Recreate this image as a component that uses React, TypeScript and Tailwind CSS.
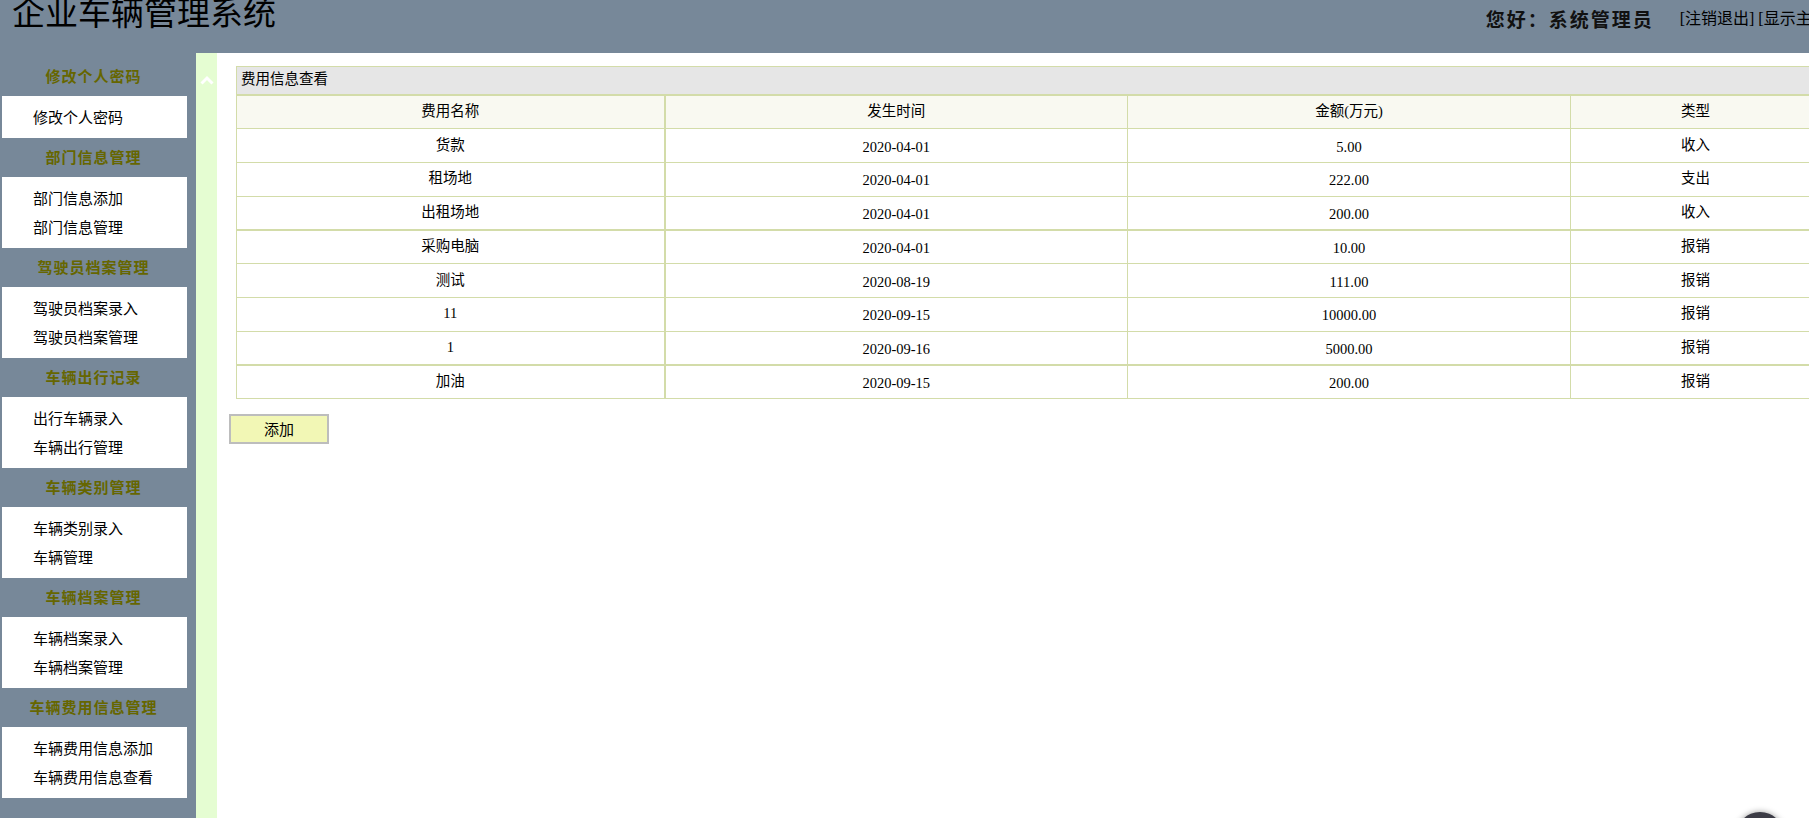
import React from 'react';

const menu = [
  { title: '修改个人密码', items: ['修改个人密码'] },
  { title: '部门信息管理', items: ['部门信息添加', '部门信息管理'] },
  { title: '驾驶员档案管理', items: ['驾驶员档案录入', '驾驶员档案管理'] },
  { title: '车辆出行记录', items: ['出行车辆录入', '车辆出行管理'] },
  { title: '车辆类别管理', items: ['车辆类别录入', '车辆管理'] },
  { title: '车辆档案管理', items: ['车辆档案录入', '车辆档案管理'] },
  { title: '车辆费用信息管理', items: ['车辆费用信息添加', '车辆费用信息查看'] },
];

const rows = [
  { name: '货款', date: '2020-04-01', amount: '5.00', type: '收入' },
  { name: '租场地', date: '2020-04-01', amount: '222.00', type: '支出' },
  { name: '出租场地', date: '2020-04-01', amount: '200.00', type: '收入' },
  { name: '采购电脑', date: '2020-04-01', amount: '10.00', type: '报销' },
  { name: '测试', date: '2020-08-19', amount: '111.00', type: '报销' },
  { name: '11', date: '2020-09-15', amount: '10000.00', type: '报销' },
  { name: '1', date: '2020-09-16', amount: '5000.00', type: '报销' },
  { name: '加油', date: '2020-09-15', amount: '200.00', type: '报销' },
];

const cjk = "font-['Noto_Sans_CJK_SC',sans-serif]";
const mixed = "font-['Liberation_Serif','Noto_Sans_CJK_SC',serif]";

function Sidebar() {
  return (
    <aside className={`w-[196px] shrink-0 bg-[#778899] pt-[4px] ${cjk}`}>
      {menu.map((g) => (
        <div key={g.title}>
          <div className="flex h-[39px] items-center justify-center pr-[9px] text-[15px] font-bold tracking-[1px] text-[#666600]">
            {g.title}
          </div>
          <ul className="ml-[2px] w-[185px] bg-white py-[6px] pl-[31px]">
            {g.items.map((it) => (
              <li key={it} className="flex h-[29.5px] items-center text-[15px] leading-none text-black">
                {it}
              </li>
            ))}
          </ul>
        </div>
      ))}
    </aside>
  );
}

export default function App() {
  const cell = 'border border-[#d3dca9] text-center align-middle';
  return (
    <div className="relative h-[818px] w-[1809px] overflow-hidden bg-white">
      <header className="flex h-[53px] items-start justify-between bg-[#778899]">
        <h1 className={`-mt-[5px] ml-[12px] text-[33px] leading-none font-normal text-black ${cjk}`}>
          企业车辆管理系统
        </h1>
        <div className="mr-[-24px] mt-[5px] flex items-center whitespace-nowrap">
          <span className={`text-[19px] font-bold tracking-[2px] text-[#111] ${cjk}`}>您好：系统管理员</span>
          <span className={`ml-[26px] text-[16px] text-black ${mixed}`}>[注销退出] [显示主页]</span>
        </div>
      </header>

      <div className="flex h-[765px]">
        <Sidebar />
        <div className="flex w-[21px] shrink-0 justify-center bg-[#e5fdd2] pt-[22px]">
          <svg width="14" height="10" viewBox="0 0 14 10">
            <polyline points="1.5,8.5 7,3 12.5,8.5" fill="none" stroke="white" strokeWidth="3" />
          </svg>
        </div>
        <main className="min-w-0 flex-1 pt-[13px]">
          <table className={`ml-[19px] w-[1584px] table-fixed border-collapse text-[14.5px] text-black ${mixed}`}>
            <colgroup>
              <col className="w-[428px]" />
              <col className="w-[463px]" />
              <col className="w-[443px]" />
              <col className="w-[250px]" />
            </colgroup>
            <thead>
              <tr className="h-[28px] bg-[#e6e6e6]">
                <th colSpan={4} className="border border-[#d3dca9] pl-[4px] text-left font-normal">
                  费用信息查看
                </th>
              </tr>
              <tr className="h-[34px] bg-[#f9f9f1]">
                {['费用名称', '发生时间', '金额(万元)', '类型'].map((h, i) => (
                  <th
                    key={h}
                    className={`${cell} border-t-2 font-normal ${i === 0 ? 'border-r-2' : ''}`}
                  >
                    {h}
                  </th>
                ))}
              </tr>
            </thead>
            <tbody>
              {rows.map((r, i) => (
                <tr key={i} className="h-[33.75px]">
                  <td className={`${cell} border-r-2 ${i === 3 || i === 7 ? 'border-t-2' : ''}`}>{r.name}</td>
                  <td className={`${cell} pt-[4px] ${i === 3 || i === 7 ? 'border-t-2' : ''}`}>{r.date}</td>
                  <td className={`${cell} pt-[4px] ${i === 3 || i === 7 ? 'border-t-2' : ''}`}>{r.amount}</td>
                  <td className={`${cell} ${i === 3 || i === 7 ? 'border-t-2' : ''}`}>{r.type}</td>
                </tr>
              ))}
            </tbody>
          </table>
          <button
            type="button"
            className={`ml-[12px] mt-[15px] h-[30px] w-[100px] border-2 border-[#bdbdbd] bg-[#f2f7b5] text-[15px] text-black ${cjk}`}
          >
            添加
          </button>
        </main>
      </div>

      <div className="absolute left-[1736px] top-[812px] h-[48px] w-[48px] rounded-full bg-[#3b3b45] shadow-[0_0_6px_rgba(0,0,0,0.4)]" />
    </div>
  );
}
